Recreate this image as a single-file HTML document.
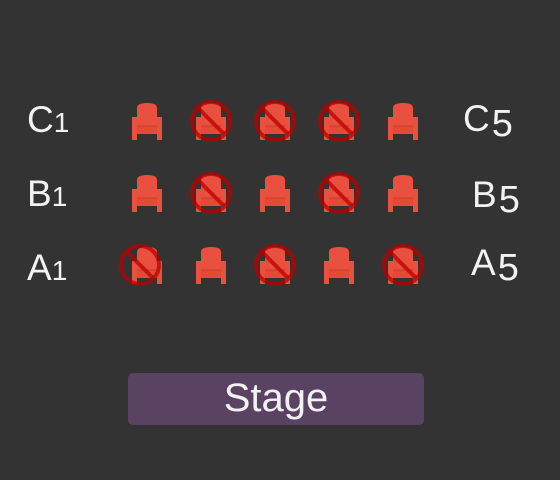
<!DOCTYPE html>
<html><head><style>
body{margin:0;width:560px;height:480px;background:#333;position:relative;overflow:hidden;font-family:"Liberation Sans",sans-serif;color:#f2f2f2}
.l{position:absolute;font-size:37px;font-weight:300;line-height:1;-webkit-text-stroke:0}
.l span{font-size:28px}
.l b{font-weight:300;font-size:38px;position:relative;top:5px;margin-left:2px}
.stage{position:absolute;left:128px;top:373px;width:296px;height:52px;background:#5a4262;border-radius:5px;text-align:center;font-size:40px;line-height:50px;color:#f2f2f2}
</style></head><body>
<div class="l" style="left:27px;top:101px">C<span>1</span></div>
<div class="l" style="left:463px;top:100px">C<b>5</b></div>
<div class="l" style="left:27px;top:175px">B<span>1</span></div>
<div class="l" style="left:472px;top:176px">B<b>5</b></div>
<div class="l" style="left:27px;top:249px">A<span>1</span></div>
<div class="l" style="left:471px;top:244px">A<b>5</b></div>
<svg width="560" height="480" style="position:absolute;left:0;top:0">
<defs>
<g id="seat">
<path d="M-10,-14 Q-10,-19 0,-19 Q10,-19 10,-14 L10,4 L-10,4 Z" fill="#e9503f"/>
<rect x="-15" y="-5" width="5" height="23" fill="#e9503f"/>
<rect x="10" y="-5" width="5" height="23" fill="#e9503f"/>
<rect x="-10" y="4" width="20" height="8" fill="#e44a3a"/>
<line x1="-10" y1="4" x2="10" y2="4" stroke="#c53d30" stroke-width="1"/>
</g>
<g id="no">
<circle r="19" fill="none" stroke="#b00" stroke-opacity="0.75" stroke-width="4"/>
<line x1="-13" y1="-13" x2="13" y2="13" stroke="#b00" stroke-opacity="0.75" stroke-width="4"/>
</g>
</defs>
<use href="#seat" x="147" y="122"/><use href="#seat" x="211" y="122"/><use href="#no" x="211" y="121"/>
<use href="#seat" x="275" y="122"/><use href="#no" x="275" y="121"/>
<use href="#seat" x="339" y="122"/><use href="#no" x="339" y="121"/>
<use href="#seat" x="403" y="122"/>
<use href="#seat" x="147" y="194"/><use href="#seat" x="211" y="194"/><use href="#no" x="211" y="193"/>
<use href="#seat" x="275" y="194"/>
<use href="#seat" x="339" y="194"/><use href="#no" x="339" y="193"/>
<use href="#seat" x="403" y="194"/>
<use href="#seat" x="147" y="266"/><use href="#no" x="140" y="265"/>
<use href="#seat" x="211" y="266"/>
<use href="#seat" x="275" y="266"/><use href="#no" x="275" y="265"/>
<use href="#seat" x="339" y="266"/>
<use href="#seat" x="403" y="266"/><use href="#no" x="403" y="265"/>
</svg>
<div class="stage">Stage</div>
</body></html>
